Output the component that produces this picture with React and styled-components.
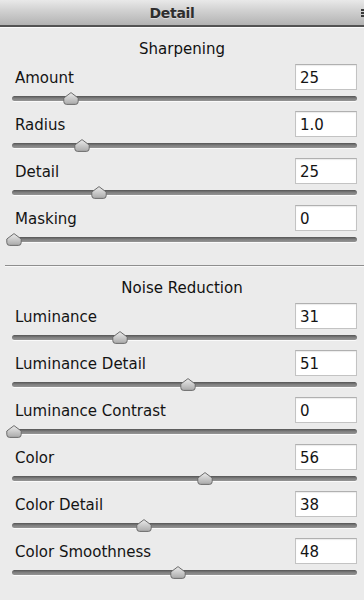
import React from "react";
import styled, { createGlobalStyle } from "styled-components";

const Global = createGlobalStyle`
  html, body { margin: 0; padding: 0; }
  body {
    background: #ebebeb;
    font-family: "DejaVu Sans", "Liberation Sans", sans-serif;
    color: #1c1c1c;
  }
`;

const Panel = styled.div`
  width: 364px;
  height: 600px;
  overflow: hidden;
  background: #ebebeb;
`;

const TitleBar = styled.div`
  display: flex;
  align-items: center;
  height: 25px;
  background: linear-gradient(#e9e9e9, #d2d2d2 40%, #b3b3b3);
  border-bottom: 2px solid #535353;
  box-shadow: 0 1px 0 #fbfbfb;
`;

const Title = styled.div`
  flex: 1;
  text-align: center;
  font-weight: bold;
  font-size: 14px;
  letter-spacing: -0.3px;
  color: #2e2e2e;
  text-shadow: 0 1px 0 rgba(255, 255, 255, 0.45);
`;

const Grip = styled.div`
  width: 3px;
  height: 8px;
  margin-left: 17px;
  background: repeating-linear-gradient(#3a3a3a 0 2px, transparent 2px 3px);
`;

const SectionHeader = styled.div`
  padding-top: 13px;
  margin-bottom: 6px;
  text-align: center;
  font-size: 15px;
  line-height: 18px;
  color: #111;
`;

const Separator = styled.div`
  margin: 13px 0 0 5px;
  height: 1px;
  background: #8e8e8e;
  box-shadow: 0 1px 0 #f8f8f8;
`;

const Row = styled.div`
  display: flex;
  flex-direction: column;
`;

const RowTop = styled.div`
  display: flex;
  align-items: center;
  justify-content: space-between;
  height: 26px;
  padding: 0 7px 0 15px;
`;

const Label = styled.span`
  font-size: 15px;
  padding-top: 1px;
  color: #141414;
`;

const ValueBox = styled.div`
  box-sizing: border-box;
  width: 62px;
  height: 26px;
  padding: 1px 0 0 4px;
  display: flex;
  align-items: center;
  background: #fff;
  border: 1px solid #c3c3c3;
  border-top-color: #b0b0b0;
  box-shadow: inset 0 1px 1px rgba(0, 0, 0, 0.08);
  font-size: 15px;
  color: #141414;
`;

const SliderArea = styled.div`
  position: relative;
  height: 21px;
  margin: 0 7px 0 12px;
`;

const Track = styled.div`
  position: absolute;
  left: 0;
  right: 0;
  top: 6px;
  height: 5px;
  border-radius: 3px;
  background: linear-gradient(#555, #808080 50%, #959595);
  box-shadow: 0 1px 0 #fafafa;
`;

const ThumbWrap = styled.div`
  position: absolute;
  top: 2px;
  width: 16px;
  height: 13px;
  margin-left: -8px;
  line-height: 0;
`;

function Thumb({ id }) {
  return (
    <svg width="16" height="13" viewBox="0 0 16 13">
      <defs>
        <linearGradient id={id} x1="0" y1="0" x2="0" y2="1">
          <stop offset="0" stopColor="#ececec" />
          <stop offset="1" stopColor="#a9a9a9" />
        </linearGradient>
      </defs>
      <path
        d="M8 0.6 L15.2 6 L15.2 9.6 Q15.2 12.4 12.4 12.4 L3.6 12.4 Q0.8 12.4 0.8 9.6 L0.8 6 Z"
        fill={`url(#${id})`}
        stroke="#6c6c6c"
        strokeWidth="1"
        strokeLinejoin="round"
      />
    </svg>
  );
}

function SliderRow({ label, value, frac, id }) {
  return (
    <Row>
      <RowTop>
        <Label>{label}</Label>
        <ValueBox>{value}</ValueBox>
      </RowTop>
      <SliderArea>
        <Track />
        <ThumbWrap style={{ left: `${2 + frac * 341}px` }}>
          <Thumb id={id} />
        </ThumbWrap>
      </SliderArea>
    </Row>
  );
}

const sharpening = [
  { label: "Amount", value: "25", frac: 25 / 150 },
  { label: "Radius", value: "1.0", frac: (1.0 - 0.5) / 2.5 },
  { label: "Detail", value: "25", frac: 0.25 },
  { label: "Masking", value: "0", frac: 0 },
];

const noise = [
  { label: "Luminance", value: "31", frac: 0.31 },
  { label: "Luminance Detail", value: "51", frac: 0.51 },
  { label: "Luminance Contrast", value: "0", frac: 0 },
  { label: "Color", value: "56", frac: 0.56 },
  { label: "Color Detail", value: "38", frac: 0.38 },
  { label: "Color Smoothness", value: "48", frac: 0.48 },
];

export default function App() {
  return (
    <Panel>
      <Global />
      <TitleBar>
        <Title>Detail</Title>
        <Grip />
      </TitleBar>
      <SectionHeader>Sharpening</SectionHeader>
      {sharpening.map((r, i) => (
        <SliderRow key={r.label} {...r} id={`ts${i}`} />
      ))}
      <Separator />
      <SectionHeader>Noise Reduction</SectionHeader>
      {noise.map((r, i) => (
        <SliderRow key={r.label} {...r} id={`tn${i}`} />
      ))}
    </Panel>
  );
}
